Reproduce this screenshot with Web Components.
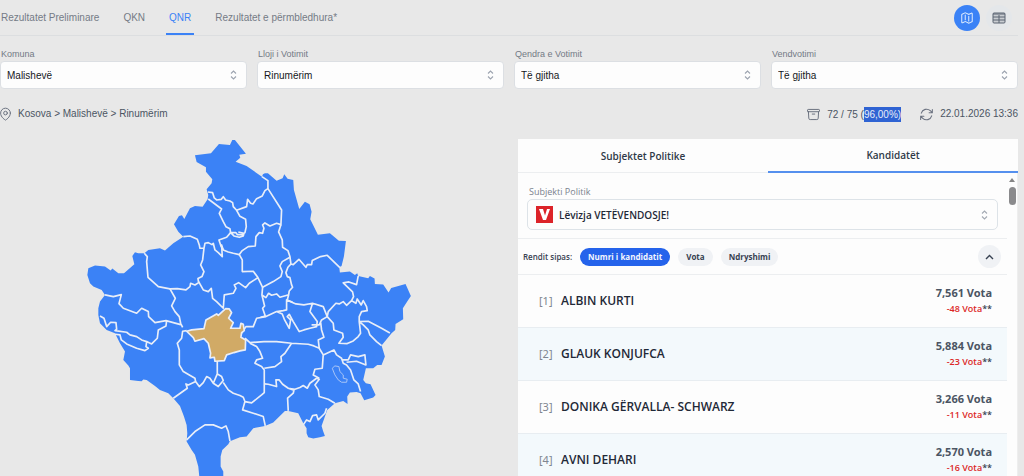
<!DOCTYPE html>
<html lang="sq">
<head>
<meta charset="utf-8">
<title>Rezultatet</title>
<style>
  html, body { margin: 0; height: 100%; }
  body { background: #e8e8e8; overflow: hidden; font: 10px/14px "Liberation Sans", Arial, sans-serif; color: #4b5563; }
</style>
</head>
<body>
<results-app></results-app>

<template id="t-app">
  <style>
    :host { display: flex; flex-direction: column; height: 100vh; box-sizing: border-box; padding-right: 6px; }
    .filters { display: grid; grid-template-columns: repeat(4, 1fr); gap: 10px; padding-top: 11px; }
    main { flex: 1; min-height: 0; display: grid; grid-template-columns: 518fr 500fr; padding-top: 17px; }
  </style>
  <top-nav></top-nav>
  <div class="filters">
    <filter-select label="Komuna" value="Malishevë"></filter-select>
    <filter-select label="Lloji i Votimit" value="Rinumërim"></filter-select>
    <filter-select label="Qendra e Votimit" value="Të gjitha"></filter-select>
    <filter-select label="Vendvotimi" value="Të gjitha"></filter-select>
  </div>
  <status-bar></status-bar>
  <main>
    <kosova-map></kosova-map>
    <results-panel></results-panel>
  </main>
</template>

<template id="t-nav">
  <style>
    :host { display: flex; justify-content: space-between; height: 35px; border-bottom: 1px solid #dcdee0; }
    nav { display: flex; gap: 18px; }
    a { box-sizing: border-box; height: 35px; padding: 11px 3px 0; color: #757b86; text-decoration: none; border-bottom: 2px solid transparent; }
    a:first-child { padding-left: 1px; }
    a[aria-current] { color: #3b82f6; border-color: #3b82f6; }
    .views { display: flex; align-items: center; gap: 6px; padding-right: 6px; }
    button { display: grid; place-items: center; width: 26px; height: 26px; padding: 0; border: 0; border-radius: 50%; background: #e4e7ea; color: #5b6472; }
    button.on { background: #3b82f6; color: #dbeafe; }
    svg { display: block; fill: none; stroke: currentColor; }
  </style>
  <nav>
    <a href="#preliminare">Rezultatet Preliminare</a>
    <a href="#qkn">QKN</a>
    <a href="#qnr" aria-current="page">QNR</a>
    <a href="#permbledhura">Rezultatet e përmbledhura*</a>
  </nav>
  <div class="views">
    <button class="on" aria-label="Harta"><svg width="14" height="14" viewBox="0 0 24 24" stroke-width="1.8" stroke-linejoin="round" stroke-linecap="round"><path d="M9 6.7V15m6-6v8.2m.5 3.6 4.9-2.4c.4-.2.6-.6.6-1V4.8c0-.8-.9-1.4-1.6-1L15.500 5.700a1.100 1.100 0 0 1-1 0L9.500 3.200a1.100 1.100 0 0 0-1 0L3.600 5.600c-.4.2-.6.6-.6 1v12.500c0 .8.9 1.400 1.600 1l3.900-1.900a1.100 1.100 0 0 1 1 0l5 2.500c.3.200.7.200 1 0z"/></svg></button>
    <button aria-label="Tabela"><svg width="14" height="12" viewBox="0 0 14 12"><rect x="1" y="1" width="12" height="10" rx="1" fill="#c9cdd2"/><path d="M1 2h12M1 5h12M1 8h12M7 3v8" stroke-width="1"/></svg></button>
  </div>
</template>

<template id="t-select">
  <style>
    :host { display: block; min-width: 0; }
    label { display: block; padding-left: 1px; font-size: 9px; line-height: 14px; color: #737a85; }
    .box { display: grid; align-items: center; }
    select, svg { grid-area: 1 / 1; }
    select { appearance: none; box-sizing: border-box; width: 100%; height: 28px; padding: 1px 6px 0; border: 1px solid #dcdfe3; border-radius: 4px; background: #fdfdfd; color: #15181c; font: inherit; }
    svg { justify-self: end; margin-right: 10px; pointer-events: none; }
  </style>
  <label for="s"></label>
  <div class="box">
    <select id="s"></select>
    <svg width="7" height="10" viewBox="0 0 7 10" fill="none" stroke="#9ca3af" stroke-width="1.100"><path d="M1 3.500l2.500-2.500L6 3.500M1 6.500L3.500 9 6 6.500"/></svg>
  </div>
</template>

<template id="t-status">
  <style>
    :host { display: flex; justify-content: space-between; align-items: center; padding-top: 17px; height: 16px; }
    div, span { display: flex; align-items: center; }
    .place { gap: 7px; }
    .info { gap: 19px; }
    .info span { gap: 7px; }
    p { margin: 0; }
    mark { background: #2f63d3; color: #e8edf8; display: inline-block; line-height: 15px; }
    svg { display: block; fill: none; stroke: #6b7280; stroke-width: 1.600; stroke-linecap: round; stroke-linejoin: round; }
  </style>
  <div class="place">
    <svg width="11" height="14" viewBox="3 1 18 22"><path d="M15 10.500a3 3 0 1 1-6 0 3 3 0 0 1 6 0z"/><path d="M20 10.500C20 17.600 12 22 12 22S4 17.600 4 10.500a8 8 0 1 1 16 0z"/></svg>
    <p>Kosova &gt; Malishevë &gt; Rinumërim</p>
  </div>
  <div class="info">
    <span><svg width="13" height="13" viewBox="1.500 2 21 20"><path d="M20.200 7.500l-.6 10.600a2.200 2.200 0 0 1-2.300 2.100H6.700a2.200 2.200 0 0 1-2.300-2.100L3.800 7.500M10 11.300h4M3.400 7.500h17.200c.6 0 1.100-.5 1.100-1.100V4.900c0-.6-.5-1.100-1.100-1.100H3.400c-.6 0-1.100.5-1.100 1.100v1.500c0 .6.500 1.100 1.100 1.100z"/></svg>
      <p>72 / 75 (<mark>96,00%)</mark></p></span>
    <span><svg width="13" height="13" viewBox="2 2 20 20"><path d="M16 9.300h5V4.400M3 19.600v-5h5M3 14.600l3.200 3.200a8.300 8.300 0 0 0 13.800-3.700M4 9.900a8.300 8.300 0 0 1 13.800-3.700L21 9.300"/></svg>
      <p>22.01.2026 13:36</p></span>
  </div>
</template>

<!-- Map drawing units are a third of a pixel at the default width -->
<template id="t-map">
  <style>
    :host { display: block; min-width: 0; }
    svg { display: block; width: 66%; margin-left: 16%; }
    .land { fill: #3b82f6; }
    .lines path { fill: none; stroke: #e9eef8; stroke-width: 5; stroke-linejoin: round; }
    .lines .lake { stroke: #a9c5f6; stroke-width: 3; }
    .active { fill: #d1aa66; stroke: #e9eef8; stroke-width: 5; stroke-linejoin: round; }
  </style>
  <svg viewBox="9 27 1026 1013" role="img" aria-label="Harta e komunave">
    <path class="land" d="M345 76L393 70 417 42 450 45 457 30 465 30 498 71 478 74 481 83 467 95 500 108 546 140 549 133 555 130 564 130 590 152 608 145 613 133 623 146 640 150 642 180 658 237 675 215 689 223 695 245 691 268 714 314 750 310 777 332 798 333 792 380 785 408 778 412 780 428 810 425 825 435 832 430 835 438 865 445 870 438 884 446 885 462 910 464 926 488 934 474 977 462 993 498 985 510 969 535 970 568 947 582 946 600 935 610 905 647 915 680 905 705 892 705 880 715 858 715 850 750 858 760 872 763 887 795 880 803 853 811 842 790 830 786 810 788 802 800 803 822 790 813 765 820 742 840 735 860 725 888 730 905 735 918 720 922 700 926 685 922 680 910 680 895 670 880 655 850 625 843 615 843 580 878 555 888 520 895 500 920 480 922 450 934 445 943 427 960 422 980 422 1010 430 1025 430 1040 358 1040 355 1010 345 975 335 960 320 935 322 910 320 885 312 860 300 828 280 805 265 790 240 780 225 768 200 750 190 749 185 754 175 753 150 750 150 715 145 707 130 690 135 665 120 640 105 610 80 600 60 580 55 555 55 535 60 515 75 495 65 480 40 470 30 460 22 435 25 415 45 407 75 410 92 422 97 416 115 430 132 430 163 403 157 378 165 367 175 370 193 370 205 360 240 355 255 362 280 340 310 320 295 305 282 283 297 258 306 256 313 267 330 235 345 228 368 230 383 208 385 195 380 178 395 160 397 148 378 125 378 112 350 96z"/>
    <g class="lines">
      <path d="M384 186L398 188 403 204 410 210 424 208 430 200 437 210 450 213 458 218 460 230 470 241 500 230 503 208 512 220 519 222 530 206 547 198 555 182 564 176 564 152 546 140"/>
      <path d="M385 207L425 237 418 250 430 275 438 290 450 296 452 308 468 308 472 314 487 314 495 308 499 290 497 268 480 259 470 241M452 308L462 318 478 322 490 318 492 310 475 306"/>
      <path d="M452 308L440 322 417 330 423 348 430 360 445 366 460 370 478 374 487 362 505 350 526 348 528 320 538 308 548 310 552 295 548 285 555 279 570 288 590 280 603 284 605 240 564 176"/>
      <path d="M603 284L596 306 607 330 608 352 624 362 630 380 633 402 640 404 657 388 678 412 682 404 695 404 697 392 722 380 742 376 780 413"/>
      <path d="M310 320L330 318 352 328 358 345 360 355 372 355 375 340 385 338 396 344 400 340 405 360 415 368 427 380 425 345 430 360M372 355L368 390 362 405 372 425 366 440 354 446 356 458 345 465 332 460 330 470 318 480 292 476 270 477 235 470 204 442 200 395 202 380 193 370"/>
      <path d="M356 455L370 480 385 485 394 475 398 505 410 515 430 535 433 495 460 490 468 475 463 465 476 458 497 473 508 460 534 443M478 374L487 390 487 425 520 424 534 443 548 472 580 455 603 440 607 425 600 408 607 395 630 382"/>
      <path d="M633 402L624 412 618 428 622 440 630 443 635 465 638 472 628 483 626 495 622 510 638 517M548 472L546 495 558 503 566 490 575 496 590 492 600 502 624 495M546 495L554 528 548 535 556 558 542 562"/>
      <path d="M835 438L830 464 807 456 790 459 818 486 821 500 815 512 828 520 832 507 844 525 850 512 860 530 862 542 845 545 838 560 838 575M815 512L800 526 790 515 778 522 768 520 745 545 742 560 760 580 762 600 788 610 790 622 777 640 802 641 820 633 835 620 842 610 838 575 865 574 905 595 930 609M838 575L850 585 865 600 870 615 890 635 905 647"/>
      <path d="M270 477L286 505 275 528 285 545 298 560 302 580 308 592M75 495L100 500 124 494 117 521 130 535 170 550 185 535 205 545 206 560 225 578 258 572 302 584M60 558L72 565 80 590 92 577 108 578 110 598 105 602 140 607 150 615 170 620 185 630 200 635 198 650 205 655 195 662 170 655 140 642 124 630 120 615 105 613M200 635L215 642 232 625 235 600 258 588 260 572"/>
      <path d="M320 602L308 604 305 625 292 640 298 660 298 705 310 725 345 745 347 755 325 765 318 762 322 775 280 805M347 755L358 770 370 758 380 740 390 745 400 760 412 732 412 692M400 760L415 770 430 752 425 740 412 732M430 758L445 780 460 790 480 797 490 802 495 815 515 819 545 795 553 788 553 720 545 710 525 700 530 690 548 685 540 665 530 650 510 640"/>
      <path d="M320 930L345 905 375 885 400 885 425 895 438 888 445 905 450 934M495 815L488 840 520 850 550 860 556 888M553 762L565 763 590 770 588 750 598 750 608 763 625 775 642 781 640 790 623 805 625 843M625 775L645 778 660 773 670 767 682 775 690 760 710 745 718 748 705 765 715 780 718 800 745 808 765 820"/>
      <path d="M485 610L498 590 520 590 530 565 558 560 590 545 607 552 614 570 628 595 632 570 622 560 628 553 640 575 658 605 672 600 690 595 710 590 712 575 690 545 698 520 672 525 648 522 620 510 620 540 610 542 590 545M698 520L730 530 742 560 725 570 718 585 695 585M722 576L725 600 732 622 715 630 718 655 702 648 685 643 635 640 590 635 552 635 510 638 495 625M635 640L615 670 603 680 605 695 585 710 553 715M718 655L730 675 727 715 705 718 700 735 718 745M730 675L762 660 770 675 785 685 790 700 800 705 812 720 822 750 835 762 842 785M785 690L805 690 812 675 835 680 855 675 858 705 830 694 800 697M670 885L680 870 690 875 698 857 710 855 715 870 735 850 740 835"/>
      <path class="lake" d="M757 715L765 708 777 710 780 725 790 735 790 745 802 748 800 757 785 757 775 750 765 735z"/>
    </g>
    <path class="active" d="M320 604L335 600 372 596 378 570 410 552 415 556 437 536 448 537 455 548 446 565 460 578 452 595 480 595 483 580 490 583 493 602 485 608 483 622 497 630 496 660 480 663 462 668 440 675 433 692 405 694 403 682 390 684 392 670 385 640 372 626 345 634 340 623z"/>
  </svg>
</template>

<template id="t-panel">
  <style>
    :host { display: flex; flex-direction: column; min-width: 0; min-height: 0; overflow: hidden; background: #fdfdfd; color: #374151; font-family: "Open Sans", "Noto Sans", sans-serif; }
    .tabs { flex: none; display: grid; grid-template-columns: 1fr 1fr; }
    .tabs button { height: 34px; padding: 0; border: 0; border-bottom: 1px solid #eceef0; background: none; color: #2f3947; font: 600 10px/14px "Open Sans", sans-serif; }
    .tabs button.on { border-bottom: 2px solid #5590ee; }
    .body { flex: 1; min-height: 0; display: flex; }
    .scroll { flex: 1; min-width: 0; overflow: hidden; }
    .bar { width: 11px; display: flex; flex-direction: column; align-items: center; gap: 5px; padding-top: 5px; border-right: 1px solid #eeeeee; box-sizing: border-box; }
    .bar i { border: 3px solid transparent; border-top: 0; border-bottom: 4px solid #858585; }
    .bar b { width: 7px; height: 18px; border-radius: 4px; background: #8a8a8c; }
    .party { padding: 12px 9px 8px; border-bottom: 1px solid #eceef0; }
    label { display: block; padding-left: 2px; font-size: 9px; line-height: 14px; color: #7b828e; }
    .box { display: grid; align-items: center; }
    .box > * { grid-area: 1 / 1; }
    select { appearance: none; box-sizing: border-box; width: 100%; height: 31px; padding: 0 31px; border: 1px solid #dde3e8; border-radius: 5px; background: #fdfdfd; color: #1f2937; font: 600 10px/14px "Open Sans", sans-serif; }
    .box svg { pointer-events: none; }
    .logo { margin-left: 9px; }
    .chev { justify-self: end; margin-right: 10px; }
    .sort { display: flex; align-items: center; gap: 8px; height: 35px; padding: 0 6px 0 5px; border-bottom: 1px solid #eceef0; font-size: 8px; font-weight: 600; }
    .sort button { height: 18px; padding: 0 8px; border: 0; border-radius: 9px; background: #f0f2f5; color: #374151; font: 700 8px/14px "Open Sans", sans-serif; }
    .sort button.on { background: #2563eb; color: #f3f6fe; }
    .sort button.up { margin-left: auto; display: grid; place-items: center; width: 23px; height: 23px; padding: 0; border-radius: 50%; }
    ul { margin: 0; padding: 0; list-style: none; }
  </style>
  <div class="tabs"><button>Subjektet Politike</button><button class="on">Kandidatët</button></div>
  <div class="body">
    <div class="scroll">
      <div class="party">
        <label for="party">Subjekti Politik</label>
        <div class="box">
          <select id="party"><option>Lëvizja VETËVENDOSJE!</option></select>
          <svg class="logo" width="17" height="17" viewBox="0 0 17 17"><path fill="#dc2329" d="M0 0h17v17H0z"/><path fill="#fff" d="M3 3h4l2 6.500L11 3h3l-4 11H7z"/></svg>
          <svg class="chev" width="7" height="10" viewBox="0 0 7 10" fill="none" stroke="#a3a9b3" stroke-width="1.100"><path d="M1 3.500l2.500-2.500L6 3.500M1 6.500L3.500 9 6 6.500"/></svg>
        </div>
      </div>
      <div class="sort">
        <span>Rendit sipas:</span>
        <button class="on">Numri i kandidatit</button>
        <button>Vota</button>
        <button>Ndryshimi</button>
        <button class="up" aria-label="Rritës"><svg width="9" height="6" viewBox="0 0 9 6" fill="none" stroke="#374151" stroke-width="1.400"><path d="M1 5l3.500-3.500L8 5"/></svg></button>
      </div>
      <ul>
        <candidate-row no="1" votes="7,561" change="-48">ALBIN KURTI</candidate-row>
        <candidate-row no="2" votes="5,884" change="-23">GLAUK KONJUFCA</candidate-row>
        <candidate-row no="3" votes="3,266" change="-11">DONIKA GËRVALLA- SCHWARZ</candidate-row>
        <candidate-row no="4" votes="2,570" change="-16">AVNI DEHARI</candidate-row>
      </ul>
    </div>
    <div class="bar"><i></i><b></b></div>
  </div>
</template>

<template id="t-row">
  <style>
    :host { display: flex; align-items: center; box-sizing: border-box; height: 53px; padding: 0 15px 0 21px; border-bottom: 1px solid #e8edf1; font-family: "Noto Sans", sans-serif; }
    :host(:nth-child(even)) { background: #f3f9fc; }
    .no { width: 22px; font-size: 11px; color: #7f8691; }
    .name { flex: 1; font: 600 12px/14px "Open Sans", sans-serif; color: #1f2937; }
    .votes { text-align: right; }
    .total { font-size: 11px; line-height: 16px; font-weight: 700; color: #4b5563; }
    .change { font: 600 9px/16px "Open Sans", sans-serif; color: #374151; }
    .change span { color: #dc2626; }
  </style>
  <div class="no"></div>
  <div class="name"><slot></slot></div>
  <div class="votes"><div class="total"></div><div class="change"><span></span>**</div></div>
</template>

<script>
  class Base extends HTMLElement {
    constructor() {
      super();
      this.attachShadow({ mode: "open" }).append(document.getElementById(this.constructor.tpl).content.cloneNode(true));
    }
    $(q) { return this.shadowRoot.querySelector(q); }
  }
  customElements.define("top-nav", class extends Base { static tpl = "t-nav"; });
  customElements.define("status-bar", class extends Base { static tpl = "t-status"; });
  customElements.define("kosova-map", class extends Base { static tpl = "t-map"; });
  customElements.define("filter-select", class extends Base {
    static tpl = "t-select";
    connectedCallback() {
      this.$("label").textContent = this.getAttribute("label");
      this.$("select").replaceChildren(new Option(this.getAttribute("value")));
    }
  });
  customElements.define("candidate-row", class extends Base {
    static tpl = "t-row";
    connectedCallback() {
      this.setAttribute("role", "listitem");
      this.$(".no").textContent = `[${this.getAttribute("no")}]`;
      this.$(".total").textContent = `${this.getAttribute("votes")} Vota`;
      this.$(".change span").textContent = `${this.getAttribute("change")} Vota`;
    }
  });
  customElements.define("results-panel", class extends Base { static tpl = "t-panel"; });
  customElements.define("results-app", class extends Base { static tpl = "t-app"; });
</script>
</body>
</html>
